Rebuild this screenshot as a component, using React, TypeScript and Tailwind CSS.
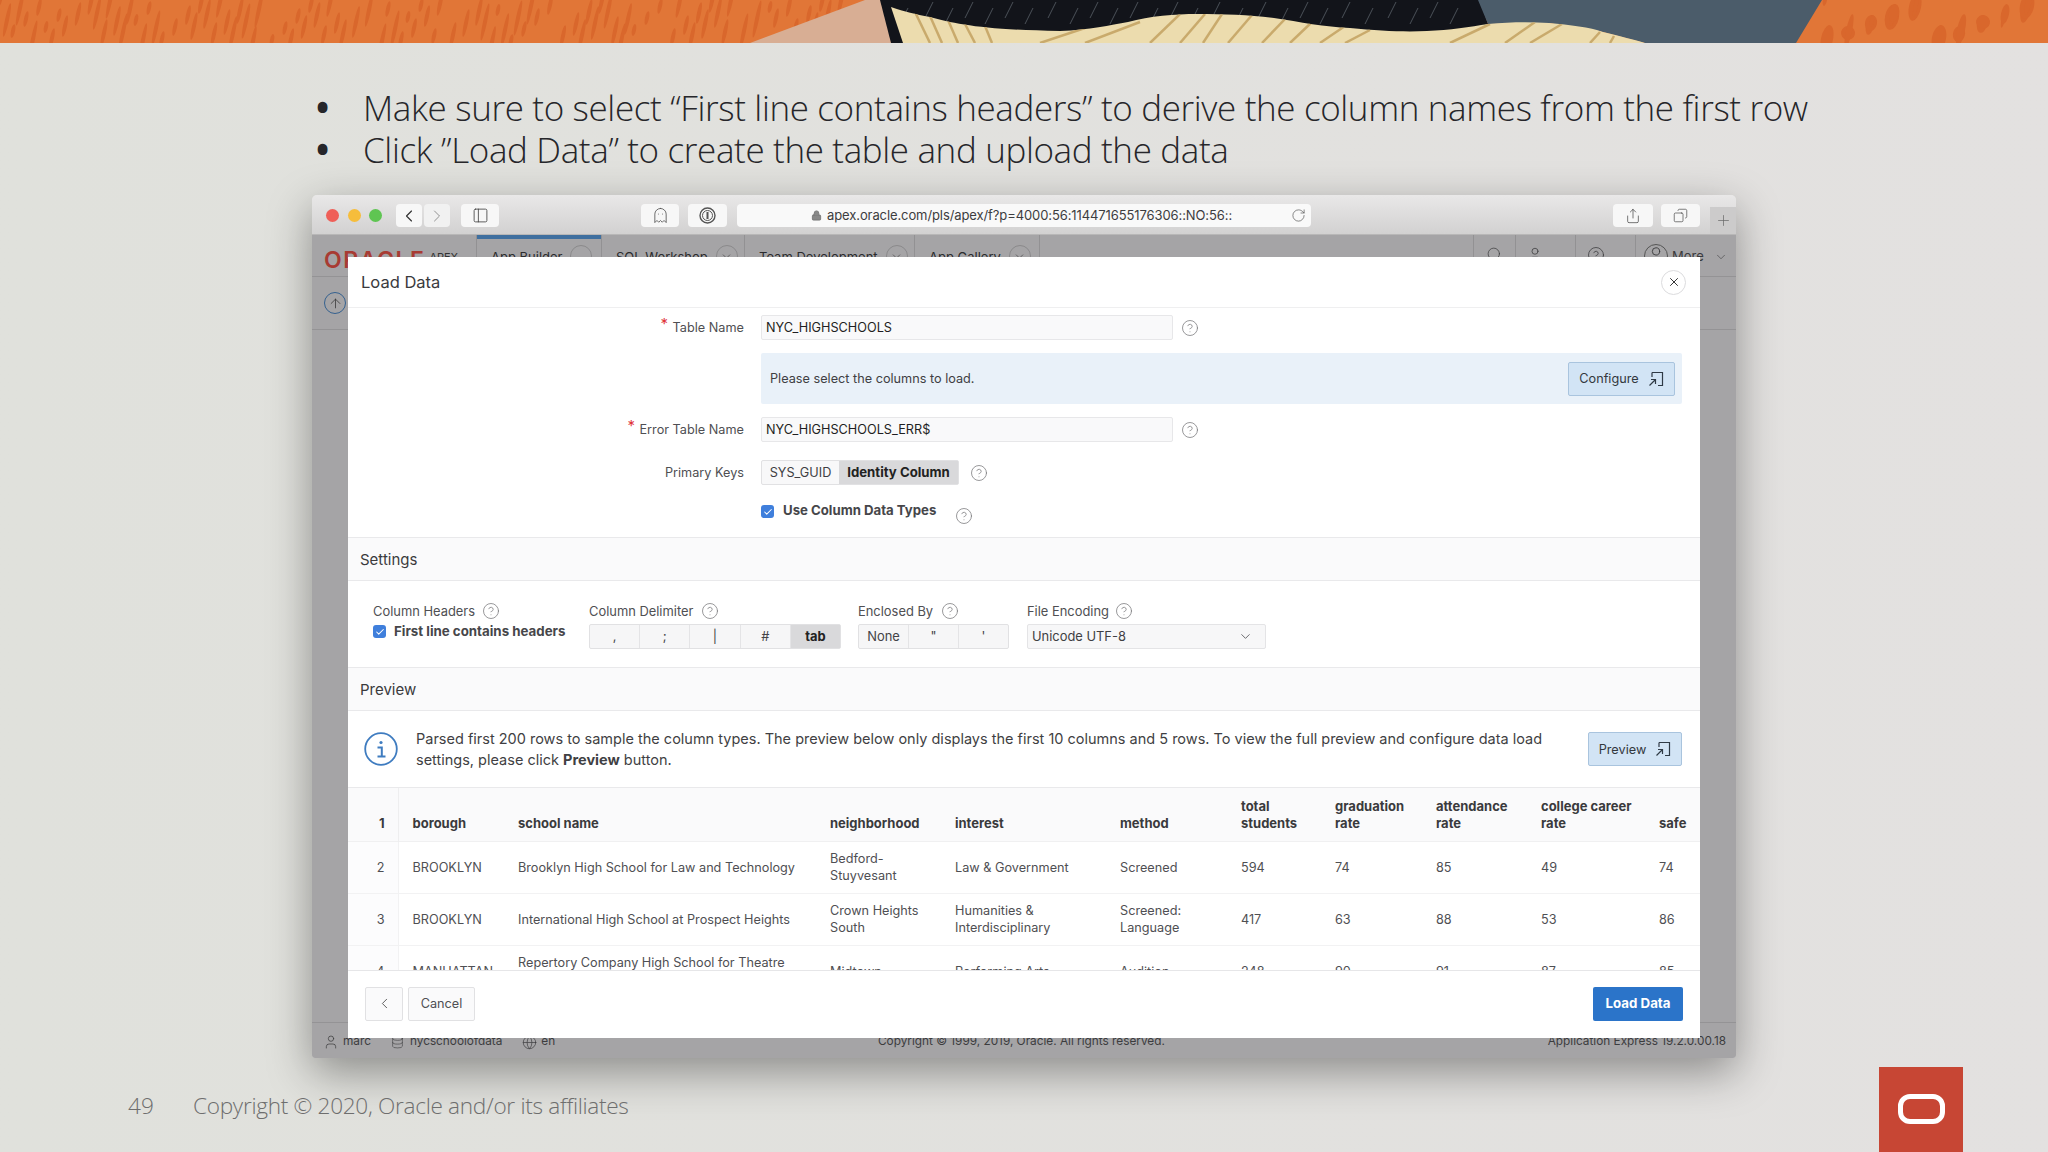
import {
  ArrowUp,
  Check,
  ChevronDown,
  ChevronLeft,
  ChevronRight,
  CircleHelp,
  Copy,
  Database,
  Ghost,
  Globe,
  Lock,
  PanelLeft,
  Plus,
  RotateCw,
  Search,
  Share,
  User,
  X,
} from "lucide-react";

const wave =
  "M891 7 C905 12 915 14 930 17 C955 24 985 30 1060 31 C1090 30 1110 25 1128 22 C1150 16 1175 14 1197 14 C1225 14 1250 15 1274 18 C1300 22 1325 27 1350 28 C1380 31 1405 32 1427 31 C1450 30 1470 27 1488 24 C1510 22 1530 22 1549 23 C1570 25 1590 27 1603 32 C1620 36 1635 40 1645 43 L903 43 Z";

const stripes = [
  [915, 12, 930, 43], [930, 16, 942, 43], [948, 20, 958, 43], [965, 24, 975, 43], [985, 26, 992, 43],
  [1040, 43, 1085, 28], [1085, 43, 1140, 22], [1150, 43, 1180, 14], [1180, 43, 1205, 14], [1203, 43, 1222, 14],
  [1228, 43, 1252, 15], [1262, 43, 1286, 18], [1290, 43, 1312, 22], [1320, 43, 1345, 26], [1345, 43, 1370, 30],
  [1450, 43, 1490, 24], [1505, 43, 1535, 22], [1530, 43, 1562, 24], [1590, 43, 1600, 32], [1610, 43, 1614, 36],
];

const streaks = [900, 925, 945, 965, 985, 1005, 1025, 1048, 1070, 1090, 1110, 1130, 1150, 1170, 1190, 1212, 1235, 1258, 1280, 1300, 1320, 1342, 1365, 1388, 1410, 1430, 1450];

// mottled paint on the orange parts
const blotches: number[][] = [];
for (let i = 0; i < 110; i++) {
  blotches.push([(i * 97) % 860, (i * 13) % 43, 2 + (i * 7) % 7, 6 + (i * 11) % 14]);
}
for (let i = 0; i < 26; i++) {
  blotches.push([1825 + (i * 67) % 223, (i * 17) % 43, 2 + (i * 5) % 6, 6 + (i * 7) % 12]);
}

// slide banner art, only a strip of the picture shows
function Banner() {
  return (
    <svg width="2048" height="43" viewBox="0 0 2048 43" className="block shrink-0">
      <defs>
        <clipPath id="cream">
          <path d={wave} />
        </clipPath>
      </defs>
      <rect width="2048" height="43" fill="#e17637" />
      {blotches.map((b, i) => (
        <ellipse key={i} cx={b[0]} cy={b[1]} rx={b[2]} ry={b[3]} fill="#d9672c" transform={`rotate(12 ${b[0]} ${b[1]})`} />
      ))}
      <path d="M865 0 L900 0 L945 43 L750 43 Z" fill="#d8ae94" />
      <rect x="891" y="0" width="12" height="43" fill="#f7dccf" />
      <path d="M880 0 L1480 0 L1488 24 L1488 43 L891 43 Z" fill="#12141a" />
      {streaks.map((x, i) => (
        <line key={x} x1={x + 8} y1={i % 2 ? 2 : 8} x2={x} y2={i % 2 ? 18 : 24} stroke="#4a5058" strokeWidth="1" />
      ))}
      <path d="M1478 0 L1822 0 L1796 43 L1645 43 L1603 32 L1549 23 L1488 24 Z" fill="#4b5c6a" />
      <path d={wave} fill="#ecdcae" />
      <g clipPath="url(#cream)">
        {stripes.map((s, i) => (
          <line key={i} x1={s[0]} y1={s[1]} x2={s[2]} y2={s[3]} stroke="#c9aa6c" strokeWidth="2.5" />
        ))}
      </g>
    </svg>
  );
}

function Help({ className = "" }: { className?: string }) {
  return <CircleHelp size={18} strokeWidth={1} className={`text-[#77777a] shrink-0 ${className}`} />;
}

function Tick({ className = "" }: { className?: string }) {
  return (
    <span className={`w-[13px] h-[13px] rounded-[3px] bg-[#3f7fdc] flex items-center justify-center shrink-0 ${className}`}>
      <Check size={10} strokeWidth={2.5} className="text-white" />
    </span>
  );
}

function OpenDialogIcon() {
  return (
    <svg width="16" height="16" viewBox="0 0 16 16" fill="none" stroke="#2f3a45" strokeWidth="1.2">
      <path d="M4 1.5 H14.5 V14.5 H10" />
      <path d="M4 1.5 V6" />
      <path d="M1.5 14.5 L7.5 8.5 M3 8.5 H7.5 V13" />
    </svg>
  );
}

function Seg({ items, active }: { items: string[]; active?: string }) {
  return (
    <div className="flex h-[25px] rounded-[2px] border border-[#e1e1e3] bg-[#f6f6f7] text-[#444447]">
      {items.map((it) => (
        <span
          key={it}
          className={`flex-1 flex items-center justify-center border-r border-[#e4e4e6] last:border-r-0 ${
            it === active ? "bg-[#d9d9db] font-bold text-[#222]" : ""
          }`}
        >
          {it}
        </span>
      ))}
    </div>
  );
}

function NavTab({ label, w }: { label: string; w: string }) {
  return (
    <div className={`${w} h-full border-r border-[#929193] flex items-start pt-[13px] pl-[14px] gap-2 text-[13px] text-[#2b2b2d]`}>
      <span>{label}</span>
      <span className="w-[22px] h-[22px] rounded-full border border-[#8a898b] flex items-center justify-center -mt-[3px]">
        <ChevronDown size={13} strokeWidth={1} />
      </span>
    </div>
  );
}

const headers = [
  "1",
  "borough",
  "school name",
  "neighborhood",
  "interest",
  "method",
  "total students",
  "graduation rate",
  "attendance rate",
  "college career rate",
  "safe",
];

const rows = [
  ["2", "BROOKLYN", "Brooklyn High School for Law and Technology", "Bedford-Stuyvesant", "Law & Government", "Screened", "594", "74", "85", "49", "74"],
  ["3", "BROOKLYN", "International High School at Prospect Heights", "Crown Heights South", "Humanities & Interdisciplinary", "Screened: Language", "417", "63", "88", "53", "86"],
  ["4", "MANHATTAN", "Repertory Company High School for Theatre Arts", "Midtown", "Performing Arts", "Audition", "248", "90", "91", "87", "85"],
];

export default function App() {
  return (
    <div className="relative w-[2048px] h-[1152px] overflow-hidden flex flex-col bg-linear-to-r from-[#e0e1dc] to-[#e3e1e0]">
      <Banner />

      <ul className="pt-[44px] pl-[363px] font-['Open_Sans',sans-serif] font-light text-[35px] leading-[42px] tracking-[-0.36px] text-[#26262a]">
        <li className="relative whitespace-nowrap">
          <span className="absolute -left-[47px] top-0 font-bold">•</span>
          Make sure to select “First line contains headers” to derive the column names from the first row
        </li>
        <li className="relative whitespace-nowrap">
          <span className="absolute -left-[47px] top-0 font-bold">•</span>
          Click ”Load Data” to create the table and upload the data
        </li>
      </ul>

      {/* safari window */}
      <div className="ml-[312px] mt-[24px] w-[1424px] h-[863px] shrink-0 flex flex-col rounded-t-[5px] rounded-b-[3px] overflow-hidden shadow-[0_14px_44px_rgba(0,0,0,0.38)] font-[Inter,sans-serif]">
        <div className="relative h-[40px] shrink-0 flex items-start pt-[9px] bg-linear-to-b from-[#e9e8e8] to-[#d2d1d1] border-b border-[#b8b7b7]">
          <div className="flex items-center gap-[8.5px] pl-[14px] pt-[5px]">
            <span className="w-[13px] h-[13px] rounded-full bg-[#ef5f58]" />
            <span className="w-[13px] h-[13px] rounded-full bg-[#f6bd3b]" />
            <span className="w-[13px] h-[13px] rounded-full bg-[#5fc552]" />
          </div>
          <div className="ml-[14px] flex gap-[2px]">
            <span className="w-[26px] h-[23px] rounded-[4px] bg-[#f7f7f7] flex items-center justify-center text-[#333]">
              <ChevronLeft size={20} strokeWidth={1.4} />
            </span>
            <span className="w-[26px] h-[23px] rounded-[4px] bg-[#f1f1f1] flex items-center justify-center text-[#888]">
              <ChevronRight size={20} strokeWidth={1.1} />
            </span>
          </div>
          <span className="ml-[11px] w-[38px] h-[23px] rounded-[4px] bg-[#f7f7f7] flex items-center justify-center text-[#444]">
            <PanelLeft size={17} strokeWidth={1.2} />
          </span>
          <span className="ml-[142px] w-[38px] h-[23px] rounded-[4px] bg-[#f7f7f7] flex items-center justify-center text-[#555]">
            <Ghost size={17} strokeWidth={1.2} />
          </span>
          <span className="ml-[9px] w-[39px] h-[23px] rounded-[4px] bg-[#f7f7f7] flex items-center justify-center">
            <svg width="17" height="17" viewBox="0 0 17 17" fill="none" stroke="#555">
              <circle cx="8.5" cy="8.5" r="7.5" strokeWidth="1.4" />
              <circle cx="8.5" cy="8.5" r="5" strokeWidth="1" />
              <path d="M8.5 5 V12" strokeWidth="2" />
            </svg>
          </span>
          <div className="ml-[10px] w-[574px] h-[23px] rounded-[4px] bg-[#f9f9f9] flex items-center pl-[74px] text-[13px] tracking-[-0.1px] text-[#3d3d40]">
            <Lock size={11} strokeWidth={2} className="text-[#777] mr-[5px]" fill="#888" />
            <span>apex.oracle.com/pls/apex/f?p=4000:56:114471655176306::NO:56::</span>
            <RotateCw size={15} strokeWidth={1.1} className="ml-auto mr-[5px] text-[#555]" />
          </div>
          <span className="ml-[302px] w-[40px] h-[23px] rounded-[4px] bg-[#f7f7f7] flex items-center justify-center text-[#444]">
            <Share size={16} strokeWidth={1.1} />
          </span>
          <span className="ml-[8px] w-[39px] h-[23px] rounded-[4px] bg-[#f7f7f7] flex items-center justify-center text-[#444]">
            <Copy size={15} strokeWidth={1.1} className="-scale-x-100" />
          </span>
          <span className="absolute right-0 bottom-0 w-[26px] h-[27px] bg-[#cccbcb] flex items-center justify-center text-[#666]">
            <Plus size={17} strokeWidth={1} />
          </span>
        </div>

        {/* apex page dimmed by the dialog */}
        <div className="relative flex-1 min-h-0 flex flex-col bg-[#a5a4a6]">
          <div className="h-[42px] shrink-0 flex items-stretch border-b border-[#949395]">
            <div className="w-[165px] border-r border-[#929193] flex items-start pl-[12px] pt-[12px] gap-[4px]">
              <span className="text-[#a83b33] text-[23px] leading-[26px] font-semibold tracking-[1.5px]">ORACLE</span>
              <span className="text-[11px] leading-[20px] text-[#333]">APEX</span>
            </div>
            <div className="relative w-[125px] h-full border-r border-[#929193] flex items-start pt-[13px] pl-[14px] gap-2 text-[13px] text-[#2b2b2d]">
              <span className="absolute left-0 top-0 w-full h-[4px] bg-[#3f6f9f]" />
              <span>App Builder</span>
              <span className="w-[22px] h-[22px] rounded-full border border-[#8a898b] -mt-[3px]" />
            </div>
            <NavTab label="SQL Workshop" w="w-[143px]" />
            <NavTab label="Team Development" w="w-[170px]" />
            <NavTab label="App Gallery" w="w-[125px]" />
            <div className="ml-auto flex items-start h-full text-[#3a3a3c]">
              <span className="w-[42px] h-full border-l border-[#929193] flex justify-center pt-[11px]">
                <Search size={17} strokeWidth={1} />
              </span>
              <span className="w-[60px] h-full border-l border-[#929193] flex gap-[4px] pl-[10px] pt-[11px]">
                <User size={18} strokeWidth={1} />
                <ChevronDown size={12} strokeWidth={1} className="mt-[8px]" />
              </span>
              <span className="w-[60px] h-full border-l border-[#929193] flex gap-[4px] pl-[11px] pt-[11px]">
                <CircleHelp size={18} strokeWidth={1} />
                <ChevronDown size={12} strokeWidth={1} className="mt-[8px]" />
              </span>
              <span className="w-[101px] h-full border-l border-[#929193] flex items-start pl-[8px] pt-[9px] gap-[4px] text-[13px]">
                <User size={24} strokeWidth={1} className="rounded-full border border-[#555]" />
                <span className="pt-[3px]">More</span>
                <ChevronDown size={14} strokeWidth={1} className="ml-[6px] mt-[6px]" />
              </span>
            </div>
          </div>
          <div className="h-[53px] shrink-0 border-b border-[#949395] flex items-center pl-[12px]">
            <span className="w-[22px] h-[22px] rounded-full border border-[#35618f] flex items-center justify-center text-[#333]">
              <ArrowUp size={15} strokeWidth={1.2} />
            </span>
          </div>
          <div className="flex-1" />
          <div className="relative h-[36px] shrink-0 border-t border-[#949395] flex items-center pl-[11px] pr-[10px] pt-[3px] text-[11.8px] text-[#3c3c3e]">
            <User size={16} strokeWidth={1.1} className="mr-[4px]" />
            <span>marc</span>
            <Database size={13} strokeWidth={1.1} className="ml-[20px] mr-[6px]" />
            <span>nycschoolofdata</span>
            <Globe size={15} strokeWidth={1.1} className="ml-[20px] mr-[4px]" />
            <span>en</span>
            <span className="absolute left-[566px]">Copyright © 1999, 2019, Oracle. All rights reserved.</span>
            <span className="ml-auto">Application Express 19.2.0.00.18</span>
          </div>

          {/* Load Data dialog */}
          <div className="absolute left-[36px] top-[22px] w-[1352px] h-[781px] bg-white flex flex-col text-[#4f4f53] text-[12.7px] leading-[17px]">
            <div className="h-[51px] shrink-0 border-b border-[#efeff0] flex items-center pl-[13px] pr-[14px]">
              <span className="text-[16.5px] text-[#3a3a3d]">Load Data</span>
              <span className="ml-auto w-[25px] h-[25px] rounded-full border border-[#dcdcde] flex items-center justify-center text-[#333]">
                <X size={14} strokeWidth={1.7} />
              </span>
            </div>

            <div className="flex-1 min-h-0 overflow-hidden">
              <div className="grid grid-cols-[396px_1fr] gap-x-[17px] pt-[7px] pb-[12px] items-center">
                <label className="relative text-right justify-self-end">
                  <span className="absolute -left-[12px] -top-[4px] text-[#e0343a] text-[15px]">*</span>
                  Table Name
                </label>
                <div className="flex items-center">
                  <div className="w-[412px] h-[25px] rounded-[2px] border border-[#e7e7e9] bg-[#f9f9fa] flex items-center px-[4px] text-[#1f1f22]">
                    NYC_HIGHSCHOOLS
                  </div>
                  <Help className="ml-[8px]" />
                </div>

                <div />
                <div className="mt-[13px] mr-[18px] h-[51px] rounded-[2px] bg-[#e9f1f9] flex items-center pl-[9px] pr-[7px] text-[#3f3f43]">
                  Please select the columns to load.
                  <span className="ml-auto w-[107px] h-[34px] rounded-[2px] border border-[#a9c4de] bg-[#d2e4f5] flex items-center justify-center gap-[9px] text-[#33383d]">
                    Configure <OpenDialogIcon />
                  </span>
                </div>

                <label className="relative text-right justify-self-end mt-[13px]">
                  <span className="absolute -left-[12px] -top-[4px] text-[#e0343a] text-[15px]">*</span>
                  Error Table Name
                </label>
                <div className="flex items-center mt-[13px]">
                  <div className="w-[412px] h-[25px] rounded-[2px] border border-[#e7e7e9] bg-[#f9f9fa] flex items-center px-[4px] text-[#1f1f22]">
                    NYC_HIGHSCHOOLS_ERR$
                  </div>
                  <Help className="ml-[8px]" />
                </div>

                <label className="text-right justify-self-end mt-[18px]">Primary Keys</label>
                <div className="flex items-center mt-[18px]">
                  <div className="flex h-[25px] rounded-[2px] border border-[#e1e1e3] bg-[#f8f8f9] text-[#3f3f43]">
                    <span className="w-[77px] flex items-center justify-center">SYS_GUID</span>
                    <span className="w-[119px] flex items-center justify-center bg-[#d9d9db] font-bold text-[13.2px] text-[#222]">Identity Column</span>
                  </div>
                  <Help className="ml-[11px]" />
                </div>

                <div />
                <div className="flex items-start mt-[20px] h-[20px]">
                  <Tick className="mt-0" />
                  <span className="ml-[9px] -mt-[3px] font-bold text-[13.2px] text-[#46464a]">Use Column Data Types</span>
                  <Help className="ml-[19px] mt-[2px]" />
                </div>
              </div>

              <div className="h-[44px] border-y border-[#e9e9eb] bg-[#fafafb] flex items-center pl-[12px] text-[15px] text-[#3a3a3d]">Settings</div>

              <div className="h-[86px] flex pl-[25px] pt-[21px] text-[12.9px]">
                <div className="w-[216px]">
                  <div className="flex items-center h-[18px] gap-[7px]">
                    Column Headers <Help />
                  </div>
                  <div className="flex items-center gap-[8px] mt-[3px] font-bold text-[13.3px] text-[#46464a]">
                    <Tick /> First line contains headers
                  </div>
                </div>
                <div className="w-[269px]">
                  <div className="flex items-center h-[18px] gap-[8px]">
                    Column Delimiter <Help />
                  </div>
                  <div className="mt-[4px] w-[252px]">
                    <Seg items={[",", ";", "|", "#", "tab"]} active="tab" />
                  </div>
                </div>
                <div className="w-[169px]">
                  <div className="flex items-center h-[18px] gap-[8px]">
                    Enclosed By <Help />
                  </div>
                  <div className="mt-[4px] w-[151px]">
                    <Seg items={["None", '"', "'"]} />
                  </div>
                </div>
                <div>
                  <div className="flex items-center h-[18px] gap-[6px]">
                    File Encoding <Help />
                  </div>
                  <div className="mt-[4px] w-[239px] h-[25px] rounded-[2px] border border-[#e4e4e6] bg-[#f7f7f8] flex items-center pl-[4px] pr-[12px] text-[#3f3f43]">
                    Unicode UTF-8
                    <ChevronDown size={15} strokeWidth={1.2} className="ml-auto" />
                  </div>
                </div>
              </div>

              <div className="h-[44px] border-y border-[#e9e9eb] bg-[#fafafb] flex items-center pl-[12px] text-[15px] text-[#3a3a3d]">Preview</div>

              <div className="h-[77px] border-b border-[#e9e9eb] flex items-center pl-[16px] pr-[18px]">
                <svg width="34" height="34" viewBox="0 0 34 34" fill="none" className="shrink-0">
                  <circle cx="17" cy="17" r="15.8" stroke="#3f7cc0" strokeWidth="1.8" />
                  <circle cx="17" cy="10.5" r="1.6" fill="#3f7cc0" />
                  <path d="M13.5 15.5 H17.8 V24 M13.5 24.5 H21.5" stroke="#3f7cc0" strokeWidth="2" />
                </svg>
                <p className="ml-[18px] w-[1155px] text-[14.5px] leading-[21px] text-[#3f3f43]">
                  Parsed first 200 rows to sample the column types. The preview below only displays the first 10 columns and 5 rows. To view the full preview and configure data load settings, please click <b>Preview</b> button.
                </p>
                <span className="ml-auto w-[94px] h-[34px] rounded-[2px] border border-[#a9c4de] bg-[#d2e4f5] flex items-center justify-center gap-[9px] text-[#33383d]">
                  Preview <OpenDialogIcon />
                </span>
              </div>

              <table className="w-[1352px] table-fixed border-collapse">
                <colgroup>
                  <col className="w-[50px]" />
                  <col className="w-[105px]" />
                  <col className="w-[312px]" />
                  <col className="w-[125px]" />
                  <col className="w-[165px]" />
                  <col className="w-[121px]" />
                  <col className="w-[94px]" />
                  <col className="w-[101px]" />
                  <col className="w-[105px]" />
                  <col className="w-[118px]" />
                  <col className="w-[56px]" />
                </colgroup>
                <thead>
                  <tr className="h-[53px] bg-[#fafafb] border-b border-[#f0f0f1] text-[#3a3a3d]">
                    {headers.map((h, i) => (
                      <th
                        key={h}
                        className={`align-bottom pb-[9px] font-bold text-[13px] ${
                          i === 0
                            ? "text-right pr-[13px] border-r border-[#eeeeef]"
                            : i === 1
                              ? "text-left pl-[14px]"
                              : "text-left pl-[15px]"
                        }`}
                      >
                        {h}
                      </th>
                    ))}
                  </tr>
                </thead>
                <tbody>
                  {rows.map((row) => (
                    <tr key={row[0]} className="h-[52px] border-b border-[#f2f2f3]">
                      {row.map((c, i) => (
                        <td
                          key={i}
                          className={`align-middle ${
                            i === 0
                              ? "text-right pr-[13px] border-r border-[#f2f2f3] bg-[#fcfcfd]"
                              : i === 1
                                ? "text-left pl-[14px]"
                                : "text-left pl-[15px] pr-[12px]"
                          }`}
                        >
                          {c}
                        </td>
                      ))}
                    </tr>
                  ))}
                </tbody>
              </table>
            </div>

            <div className="h-[68px] shrink-0 border-t border-[#e6e6e8] flex items-center pl-[17px] pr-[17px] pb-[2px]">
              <span className="w-[38px] h-[34px] rounded-[2px] border border-[#e1e1e3] bg-[#fafafb] flex items-center justify-center text-[#444]">
                <ChevronLeft size={17} strokeWidth={1.2} />
              </span>
              <span className="ml-[5px] w-[67px] h-[34px] rounded-[2px] border border-[#e1e1e3] bg-[#fafafb] flex items-center justify-center">Cancel</span>
              <span className="ml-auto w-[90px] h-[34px] rounded-[2px] bg-[#2b74c9] flex items-center justify-center font-bold text-[13.3px] text-white">Load Data</span>
            </div>
          </div>
        </div>
      </div>

      {/* slide footer */}
      <div className="flex-1 min-h-0 flex items-start pl-[128px] font-['Open_Sans',sans-serif] font-light text-[22.6px] text-[#6e6e6e]">
        <span className="mt-[31px] w-[65px]">49</span>
        <span className="mt-[31px] tracking-[-0.3px]">Copyright © 2020, Oracle and/or its affiliates</span>
        <div className="absolute right-[85px] bottom-0 w-[84px] h-[85px] bg-[#c74634] flex items-start justify-center pt-[27px]">
          <span className="w-[47px] h-[30px] rounded-[12px] border-[5px] border-white" />
        </div>
      </div>
    </div>
  );
}
